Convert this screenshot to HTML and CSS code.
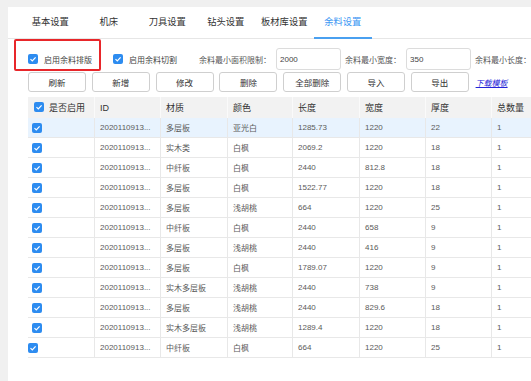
FILE: index.html
```html
<!DOCTYPE html>
<html lang="zh">
<head>
<meta charset="utf-8">
<link rel="stylesheet" href="styles.css">
</head>
<body>
<div class="panel">
  <div class="tabs">
    <div class="tab">基本设置</div>
    <div class="tab">机床</div>
    <div class="tab">刀具设置</div>
    <div class="tab">钻头设置</div>
    <div class="tab">板材库设置</div>
    <div class="tab active">余料设置</div>
  </div>

  <div class="filters">
    <label class="check"><span class="cb"><svg viewBox="0 0 10 10"><path d="M2.5 5.2 L4.3 7 L7.6 3.3" fill="none" stroke="#fff" stroke-width="1.2"/></svg></span>启用余料排版</label>
    <label class="check second"><span class="cb"><svg viewBox="0 0 10 10"><path d="M2.5 5.2 L4.3 7 L7.6 3.3" fill="none" stroke="#fff" stroke-width="1.2"/></svg></span>启用余料切割</label>
    <span class="flabel first">余料最小面积限制：</span>
    <span class="input">2000</span>
    <span class="flabel">余料最小宽度：</span>
    <span class="input">350</span>
    <span class="flabel">余料最小长度：</span>
  </div>
  <div class="highlight"></div>

  <div class="actions">
    <button class="btn">刷新</button>
    <button class="btn">新增</button>
    <button class="btn">修改</button>
    <button class="btn">删除</button>
    <button class="btn">全部删除</button>
    <button class="btn">导入</button>
    <button class="btn">导出</button>
    <a class="link" href="#">下载模板</a>
  </div>

  <table class="grid">
    <colgroup>
      <col class="w1"><col class="w2"><col class="w3"><col class="w4"><col class="w5"><col class="w6"><col class="w7"><col class="w8">
    </colgroup>
    <thead>
      <tr>
        <th class="chk-h"><span class="cb"><svg viewBox="0 0 10 10"><path d="M2.5 5.2 L4.3 7 L7.6 3.3" fill="none" stroke="#fff" stroke-width="1.2"/></svg></span>是否启用</th>
        <th>ID</th><th>材质</th><th>颜色</th><th>长度</th><th>宽度</th><th>厚度</th><th>总数量</th>
      </tr>
    </thead>
    <tbody>
      <tr class="sel"><td class="chk"><span class="cb"><svg viewBox="0 0 10 10"><path d="M2.5 5.2 L4.3 7 L7.6 3.3" fill="none" stroke="#fff" stroke-width="1.2"/></svg></span></td><td>2020110913...</td><td>多层板</td><td>亚光白</td><td>1285.73</td><td>1220</td><td>22</td><td>1</td></tr>
      <tr><td class="chk"><span class="cb"><svg viewBox="0 0 10 10"><path d="M2.5 5.2 L4.3 7 L7.6 3.3" fill="none" stroke="#fff" stroke-width="1.2"/></svg></span></td><td>2020110913...</td><td>实木类</td><td>白枫</td><td>2069.2</td><td>1220</td><td>18</td><td>1</td></tr>
      <tr><td class="chk"><span class="cb"><svg viewBox="0 0 10 10"><path d="M2.5 5.2 L4.3 7 L7.6 3.3" fill="none" stroke="#fff" stroke-width="1.2"/></svg></span></td><td>2020110913...</td><td>中纤板</td><td>白枫</td><td>2440</td><td>812.8</td><td>18</td><td>1</td></tr>
      <tr><td class="chk"><span class="cb"><svg viewBox="0 0 10 10"><path d="M2.5 5.2 L4.3 7 L7.6 3.3" fill="none" stroke="#fff" stroke-width="1.2"/></svg></span></td><td>2020110913...</td><td>多层板</td><td>白枫</td><td>1522.77</td><td>1220</td><td>18</td><td>1</td></tr>
      <tr><td class="chk"><span class="cb"><svg viewBox="0 0 10 10"><path d="M2.5 5.2 L4.3 7 L7.6 3.3" fill="none" stroke="#fff" stroke-width="1.2"/></svg></span></td><td>2020110913...</td><td>多层板</td><td>浅胡桃</td><td>664</td><td>1220</td><td>25</td><td>1</td></tr>
      <tr><td class="chk"><span class="cb"><svg viewBox="0 0 10 10"><path d="M2.5 5.2 L4.3 7 L7.6 3.3" fill="none" stroke="#fff" stroke-width="1.2"/></svg></span></td><td>2020110913...</td><td>中纤板</td><td>白枫</td><td>2440</td><td>658</td><td>9</td><td>1</td></tr>
      <tr><td class="chk"><span class="cb"><svg viewBox="0 0 10 10"><path d="M2.5 5.2 L4.3 7 L7.6 3.3" fill="none" stroke="#fff" stroke-width="1.2"/></svg></span></td><td>2020110913...</td><td>多层板</td><td>浅胡桃</td><td>2440</td><td>416</td><td>9</td><td>1</td></tr>
      <tr><td class="chk"><span class="cb"><svg viewBox="0 0 10 10"><path d="M2.5 5.2 L4.3 7 L7.6 3.3" fill="none" stroke="#fff" stroke-width="1.2"/></svg></span></td><td>2020110913...</td><td>多层板</td><td>白枫</td><td>1789.07</td><td>1220</td><td>9</td><td>1</td></tr>
      <tr><td class="chk"><span class="cb"><svg viewBox="0 0 10 10"><path d="M2.5 5.2 L4.3 7 L7.6 3.3" fill="none" stroke="#fff" stroke-width="1.2"/></svg></span></td><td>2020110913...</td><td>实木多层板</td><td>浅胡桃</td><td>2440</td><td>738</td><td>9</td><td>1</td></tr>
      <tr><td class="chk"><span class="cb"><svg viewBox="0 0 10 10"><path d="M2.5 5.2 L4.3 7 L7.6 3.3" fill="none" stroke="#fff" stroke-width="1.2"/></svg></span></td><td>2020110913...</td><td>多层板</td><td>浅胡桃</td><td>2440</td><td>829.6</td><td>18</td><td>1</td></tr>
      <tr><td class="chk"><span class="cb"><svg viewBox="0 0 10 10"><path d="M2.5 5.2 L4.3 7 L7.6 3.3" fill="none" stroke="#fff" stroke-width="1.2"/></svg></span></td><td>2020110913...</td><td>实木多层板</td><td>浅胡桃</td><td>1289.4</td><td>1220</td><td>18</td><td>1</td></tr>
      <tr><td class="chk last"><span class="cb"><svg viewBox="0 0 10 10"><path d="M2.5 5.2 L4.3 7 L7.6 3.3" fill="none" stroke="#fff" stroke-width="1.2"/></svg></span></td><td>2020110913...</td><td>中纤板</td><td>白枫</td><td>664</td><td>1220</td><td>25</td><td>1</td></tr>
    </tbody>
  </table>
</div>
</body>
</html>
```

FILE: styles.css
```css
html, body {
  margin: 0;
  padding: 0;
  background: #f0f0f0;
  overflow: hidden;
  font-family: "Liberation Sans", "Noto Sans CJK SC", sans-serif;
}

.panel {
  position: relative;
  margin: 7px 0 0 8px;
  height: 374px;
  background: #fff;
  overflow: hidden;
}

/* tabs */
.tabs {
  display: flex;
  height: 31px;
  padding-left: 13px;
  border-bottom: 1px solid #e6e6e6;
}
.tab {
  position: relative;
  width: 58.5px;
  line-height: 31px;
  text-align: center;
  font-size: 9.3px;
  color: #333;
  white-space: nowrap;
}
.tab.active {
  color: #3b97f3;
}
.tab.active::after {
  content: "";
  position: absolute;
  left: 0;
  right: 0;
  bottom: -1px;
  height: 2px;
  background: #4aa0f0;
}

/* checkbox */
.cb {
  display: inline-flex;
  width: 10px;
  height: 10px;
  border-radius: 2px;
  background: #2d8cf0;
  flex: none;
}
.cb svg {
  width: 10px;
  height: 10px;
}

/* filter row */
.filters {
  display: flex;
  align-items: center;
  height: 22px;
  margin-top: 9px;
  padding-left: 20px;
  font-size: 8px;
  color: #555;
  white-space: nowrap;
}
.check {
  display: flex;
  align-items: center;
  gap: 6px;
  color: #444;
}
.check.second {
  margin-left: 21px;
}
.flabel {
  margin-left: 4px;
}
.flabel.first {
  margin-left: 22px;
}
.input {
  box-sizing: border-box;
  width: 66px;
  height: 22px;
  margin-left: 5px;
  padding: 0 3px;
  border: 1px solid #dcdcdc;
  border-radius: 3px;
  line-height: 20px;
  color: #444;
  padding-top: 1px;
}

.highlight {
  position: absolute;
  left: 6px;
  top: 32px;
  width: 83px;
  height: 28px;
  border: 2px solid #e8262a;
  border-radius: 2px;
}

/* actions */
.actions {
  display: flex;
  align-items: center;
  gap: 5.8px;
  height: 20px;
  margin-top: 2px;
  padding-left: 20px;
}
.btn {
  box-sizing: border-box;
  width: 58px;
  height: 20px;
  padding: 0;
  border: 1px solid #cfcfcf;
  border-radius: 3px;
  background: #fff;
  font-family: inherit;
  font-size: 8.5px;
  color: #333;
}
.link {
  margin-left: 1px;
  font-size: 8px;
  color: #2424d8;
  text-decoration: underline;
  font-style: italic;
}

/* table */
.grid {
  margin: 5px 0 0 20px;
  width: 524px;
  table-layout: fixed;
  border-collapse: separate;
  border-spacing: 0;
  font-size: 8px;
  color: #666;
}
.w1 { width: 67px; }
.w2 { width: 66px; }
.w3 { width: 67px; }
.w4 { width: 65px; }
.w5 { width: 67px; }
.w6 { width: 66px; }
.w7 { width: 66px; }
.w8 { width: 60px; }

.grid th {
  height: 21px;
  padding: 0 5px;
  background: #f2f2f2;
  border-right: 1px solid #fafafa;
  text-align: left;
  font-weight: normal;
  font-size: 9px;
  color: #333;
  white-space: nowrap;
  overflow: hidden;
}
.grid th.chk-h {
  padding-left: 6px;
}
.grid th.chk-h .cb {
  vertical-align: -1px;
  margin-right: 5px;
}
.grid td {
  height: 19px;
  padding: 0 5px;
  border-bottom: 1px solid #e8e8e8;
  border-right: 1px solid #e8e8e8;
  white-space: nowrap;
  overflow: hidden;
  color: #5a5a5a;
}
.grid td.chk {
  padding-left: 4px;
  line-height: 0;
}
.grid td.chk.last {
  padding-left: 0;
}
.grid tr.sel td {
  background: #e8f3fe;
}
```
